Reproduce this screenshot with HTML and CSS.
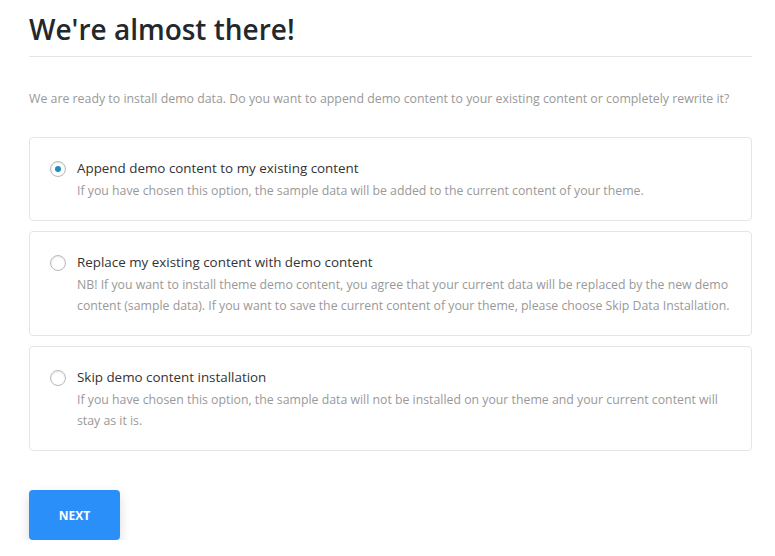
FILE: index.html
```html
<!DOCTYPE html>
<html>
<head>
<meta charset="utf-8">
<link rel="stylesheet" href="styles.css">
</head>
<body>
<div class="wrap">
  <h1 class="title">We're almost there!</h1>
  <p class="intro">We are ready to install demo data. Do you want to append demo content to your existing content or completely rewrite it?</p>
  <div class="options">
    <label class="option">
      <span class="radio checked"></span>
      <span class="body">
        <span class="name">Append demo content to my existing content</span>
        <span class="desc">If you have chosen this option, the sample data will be added to the current content of your theme.</span>
      </span>
    </label>
    <label class="option">
      <span class="radio"></span>
      <span class="body">
        <span class="name">Replace my existing content with demo content</span>
        <span class="desc">NB! If you want to install theme demo content, you agree that your current data will be replaced by the new demo content (sample data). If you want to save the current content of your theme, please choose Skip Data Installation.</span>
      </span>
    </label>
    <label class="option">
      <span class="radio"></span>
      <span class="body">
        <span class="name">Skip demo content installation</span>
        <span class="desc">If you have chosen this option, the sample data will not be installed on your theme and your current content will stay as it is.</span>
      </span>
    </label>
  </div>
  <button class="next">NEXT</button>
</div>
</body>
</html>
```
FILE: styles.css
```css
html, body { margin: 0; padding: 0; background: #fff; }
body { font-family: "Open Sans", "Noto Sans", sans-serif; color: #333; }
.wrap { width: 723px; padding: 12px 0 0 29px; }
.title {
  margin: 0;
  font-size: 28px;
  font-weight: 600;
  line-height: 34px;
  color: #23282d;
  padding-bottom: 10px;
  border-bottom: 1px solid #e5e5e5;
}
.intro {
  margin: 33px 0 0;
  font-size: 12.35px;
  line-height: 18px;
  color: #999;
}
.options { display: flex; flex-direction: column; gap: 10px; margin-top: 29px; }
.option {
  display: flex;
  gap: 11px;
  border: 1px solid #e5e5e5;
  border-radius: 4px;
  padding: 20px 12px 19px 20px;
}
.radio {
  flex: none;
  width: 14px; height: 14px;
  margin-top: 3px;
  border: 1px solid #b4b9be;
  border-radius: 50%;
  box-shadow: inset 0 1px 2px rgba(0,0,0,0.1);
  position: relative;
  background: #fff;
}
.radio.checked::after {
  content: "";
  position: absolute;
  left: 4px; top: 4px;
  width: 6px; height: 6px;
  border-radius: 50%;
  background: #1e8cbe;
}
.body { display: flex; flex-direction: column; gap: 2px; }
.name { font-size: 13.4px; line-height: 20px; color: #333; }
.desc { font-size: 12.3px; line-height: 21px; color: #999; }
.next {
  margin-top: 39px;
  width: 91px; height: 50px;
  border: 0;
  border-radius: 4px;
  background: #2b8ffa;
  color: #fff;
  font-family: "Open Sans", sans-serif;
  font-weight: 700;
  font-size: 12px;
  box-shadow: 0 5px 12px rgba(0,0,0,0.15);
}
```
